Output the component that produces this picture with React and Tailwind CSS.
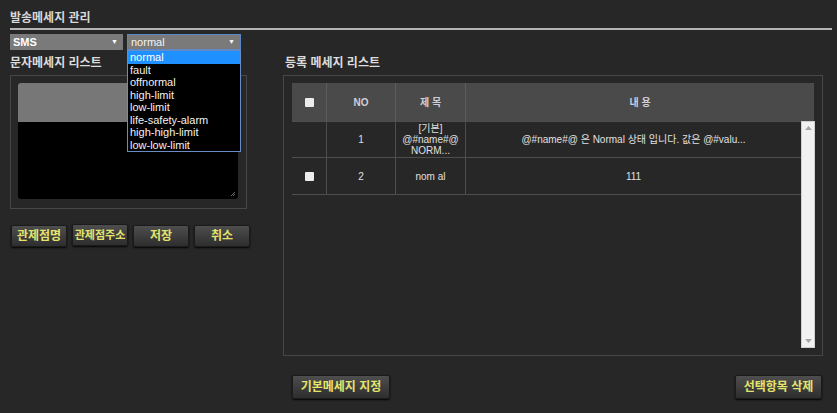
import { useState } from 'react'

const font = { fontFamily: '"Liberation Sans", "Noto Sans CJK KR", sans-serif' }

const levels = [
  'normal',
  'fault',
  'offnormal',
  'high-limit',
  'low-limit',
  'life-safety-alarm',
  'high-high-limit',
  'low-low-limit',
]

function DarkButton({ children, className = '' }) {
  return (
    <button
      className={`flex items-center justify-center rounded-[2px] border border-[#1b1b1b] bg-gradient-to-b from-[#4e4e4e] to-[#2e2e2e] font-bold text-[#e4e46c] shadow-[0_1px_2px_rgba(0,0,0,0.9)] ${className}`}
    >
      {children}
    </button>
  )
}

function Check() {
  return <div className="h-[9px] w-[9px] rounded-[1px] bg-[#ececec]" />
}

export default function App() {
  const [level] = useState('normal')

  return (
    <div style={font} className="relative h-[413px] w-[837px] overflow-hidden bg-[#272727] pl-[10px] text-[#dcdcdc]">
      {/* 타이틀 */}
      <div className="flex h-[28px] items-center pt-[7px] text-[12px] font-bold text-[#d8d8d8]">
        발송메세지 관리
      </div>
      <div className="h-[2px] w-[822px] bg-[#b4b4b4]" />

      {/* 선택 박스 */}
      <div className="mt-[4px] flex h-[16px] gap-[4px]">
        <div className="flex w-[113px] items-center justify-between bg-[#7a7a7a] pl-[3px] pr-[5px] text-[11px] font-bold text-white">
          SMS <span className="text-[7px]">▼</span>
        </div>
        <div className="flex w-[114px] items-center justify-between border border-[#5d86c4] bg-[#7a7a7a] pl-[3px] pr-[5px] text-[11px] text-[#f4f4f4]">
          {level} <span className="text-[7px]">▼</span>
        </div>
      </div>

      <div className="flex">
        {/* 문자메세지 리스트 */}
        <div className="w-[273px]">
          <div className="flex h-[25px] items-center text-[12px] font-bold">문자메세지 리스트</div>
          <div className="h-[134px] w-[237px] border border-[#474747] pt-[7px] pl-[7px]">
            <div className="h-[39px] w-[220px] rounded-t-[3px] bg-[#777777]" />
            <div className="relative h-[77px] w-[220px] rounded-b-[3px] bg-black">
              <svg className="absolute bottom-[2px] right-[2px]" width="6" height="6" viewBox="0 0 6 6">
                <path d="M5 1L1 5M5 3L3 5" stroke="#888" strokeWidth="0.8" />
              </svg>
            </div>
          </div>
          <div className="mt-[16px] flex items-start gap-[5px] pl-[1px]">
            <DarkButton className="h-[22px] w-[56px] text-[12px]">관제점명</DarkButton>
            <DarkButton className="-mt-[1px] h-[22px] w-[56px] text-[11px]">관제점주소</DarkButton>
            <DarkButton className="h-[22px] w-[56px] text-[12px]">저장</DarkButton>
            <DarkButton className="h-[22px] w-[56px] text-[12px]">취소</DarkButton>
          </div>
        </div>

        {/* 등록 메세지 리스트 */}
        <div className="w-[541px]">
          <div className="flex h-[25px] items-center pl-[2px] text-[12px] font-bold">등록 메세지 리스트</div>
          <div className="h-[281px] w-[540px] border border-[#474747] pt-[7px] pl-[8px]">
            <div className="w-[523px]">
              {/* 헤더 */}
              <div className="grid h-[38px] w-[522px] grid-cols-[35px_69px_70px_1fr] bg-[#4a4a4a] text-[10px] font-bold text-[#cfcfd8]">
                <div className="flex items-center justify-center border-r border-[#5c5c5c]">
                  <Check />
                </div>
                <div className="flex items-center justify-center border-r border-[#5c5c5c]">NO</div>
                <div className="flex items-center justify-center border-r border-[#5c5c5c]">제 목</div>
                <div className="flex items-center justify-center">내 용</div>
              </div>
              <div className="flex h-[227px]">
                <div className="w-[509px] text-[10px] text-[#e0e0e0]">
                  <div className="grid h-[37px] grid-cols-[35px_69px_70px_1fr] border-t border-b border-[#4e4e4e]">
                    <div className="border-r border-[#4e4e4e]" />
                    <div className="flex items-center justify-center border-r border-[#4e4e4e]">1</div>
                    <div className="flex flex-col items-center justify-center border-r border-[#4e4e4e] leading-[11px]">
                      <span>[기본]</span>
                      <span>@#name#@</span>
                      <span>NORM...</span>
                    </div>
                    <div className="flex items-center justify-center">@#name#@ 은 Normal 상태 입니다. 값은 @#valu...</div>
                  </div>
                  <div className="grid h-[37px] grid-cols-[35px_69px_70px_1fr] border-b border-[#4e4e4e]">
                    <div className="flex items-center justify-center border-r border-[#4e4e4e]">
                      <Check />
                    </div>
                    <div className="flex items-center justify-center border-r border-[#4e4e4e]">2</div>
                    <div className="flex items-center justify-center border-r border-[#4e4e4e]">nom al</div>
                    <div className="flex items-center justify-center">111</div>
                  </div>
                </div>
                <div className="flex w-[14px] flex-col items-center justify-between border border-[#cfcfcf] bg-[#f1f1f1] py-[4px]">
                  <svg width="7" height="4" viewBox="0 0 7 4">
                    <path d="M0 4L3.5 0L7 4Z" fill="#a6a6a6" />
                  </svg>
                  <svg width="7" height="4" viewBox="0 0 7 4">
                    <path d="M0 0L3.5 4L7 0Z" fill="#a6a6a6" />
                  </svg>
                </div>
              </div>
            </div>
          </div>
          <div className="mt-[19px] flex w-[540px] justify-between pl-[9px] pr-[1px]">
            <DarkButton className="h-[24px] w-[98px] text-[12px]">기본메세지 지정</DarkButton>
            <DarkButton className="h-[24px] w-[87px] text-[12px]">선택항목 삭제</DarkButton>
          </div>
        </div>
      </div>

      {/* 드롭다운 목록 */}
      <ul className="absolute left-[127px] top-[50px] w-[114px] border border-[#6a8cc4] bg-black py-0 text-[11px] text-[#f2f2f2]">
        {levels.map((l) => (
          <li
            key={l}
            className={`flex h-[12.5px] items-center pl-[2px] ${l === level ? 'bg-[#1e90ff] text-white' : ''}`}
          >
            {l}
          </li>
        ))}
      </ul>
    </div>
  )
}
